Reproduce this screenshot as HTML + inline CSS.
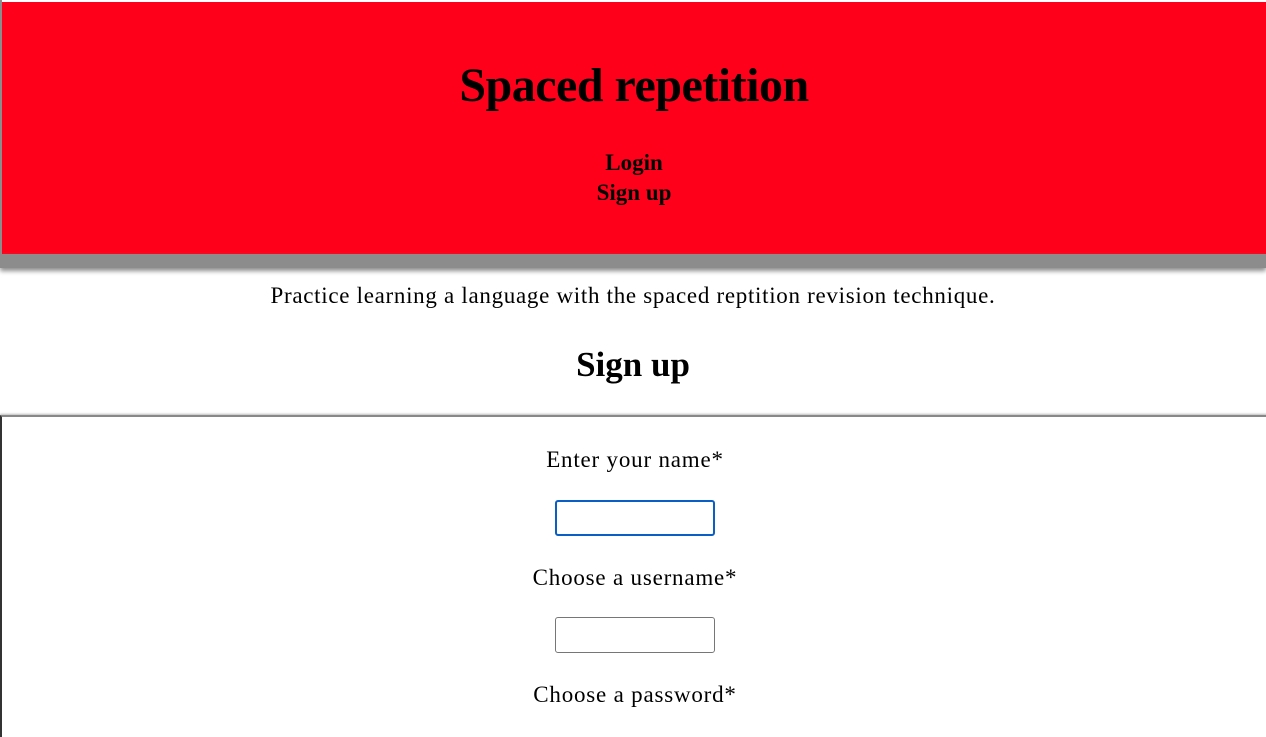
<!DOCTYPE html>
<html><head><style>
body{margin:0;width:1266px;height:723px;overflow:hidden;background:#fff;font-family:"Liberation Serif",serif;color:#000;position:relative}
.hdr{position:absolute;left:2px;top:2px;width:1264px;height:252px;background:#ff001b;text-align:center}
.edge{position:absolute;left:0;top:0;width:2px;height:254px;background:#8c8c8c}
.shadow{position:absolute;left:0;top:254px;width:1266px;height:14px;background:#8c8c8c;box-shadow:0 3px 5px #8c8c8c}
h1{position:absolute;top:56px;width:100%;margin:0;font-size:48px;font-weight:bold;letter-spacing:-0.5px}
.nav{position:absolute;top:146px;width:100%;font-size:23px;font-weight:bold;line-height:30px}
.tag{position:absolute;top:283px;width:100%;text-align:center;font-size:23px;letter-spacing:0.7px}
h2{position:absolute;top:345px;width:100%;text-align:center;margin:0;font-size:35px;font-weight:bold}
.form{position:absolute;left:0;top:415px;width:1266px;height:320px;border-top:2px solid #888;border-left:2px solid #333;box-shadow:0 -1px 2px #bbb;text-align:center}
.lbl{position:absolute;left:0;width:100%;font-size:23px;letter-spacing:0.8px}
.in{position:absolute;left:553px;width:160px;height:36px;box-sizing:border-box;border:1px solid #767676;border-radius:3px}
</style></head><body>
<div class="edge"></div>
<div class="hdr"><h1>Spaced repetition</h1><div class="nav">Login<br>Sign up</div></div>
<div class="shadow"></div>
<div class="tag">Practice learning a language with the spaced reptition revision technique.</div>
<h2>Sign up</h2>
<div class="form">
<div class="lbl" style="top:30px">Enter your name*</div>
<div class="in" style="top:83px;border:2px solid #0a5fc4"></div>
<div class="lbl" style="top:148px">Choose a username*</div>
<div class="in" style="top:200px"></div>
<div class="lbl" style="top:265px">Choose a password*</div>
</div>
</body></html>
